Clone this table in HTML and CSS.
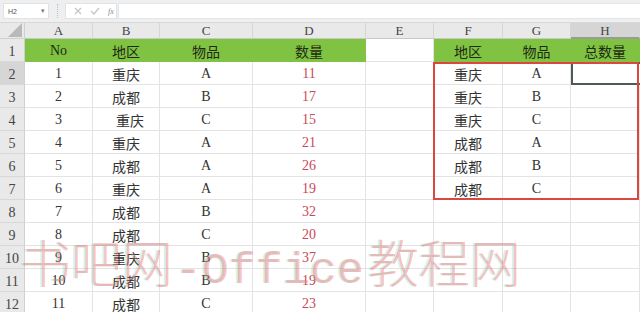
FILE: index.html
```html
<!DOCTYPE html>
<html>
<head>
<meta charset="utf-8">
<link rel="stylesheet" href="styles.css">
</head>
<body>
<div class="app">
  <div class="toolbar">
    <div class="namebox"><span class="nb-text">H2</span><span class="nb-arrow">▾</span></div>
    <div class="sep"></div>
    <div class="fxbox">
      <svg width="8" height="8" viewBox="0 0 8 8"><path d="M1 1L7 7M7 1L1 7" stroke="#c4c4c4" stroke-width="1.2"/></svg>
      <svg width="10" height="8" viewBox="0 0 10 8"><path d="M1 4L4 7L9 1" stroke="#c4c4c4" stroke-width="1.2" fill="none"/></svg>
      <span class="fx">fx</span>
    </div>
    <div class="formula"></div>
  </div>
  <div class="sheet">
    <div class="corner"><svg width="14" height="14" viewBox="0 0 14 14"><path d="M14 0L14 14L0 14Z" fill="#b9b9b9"/></svg></div>
    <div class="ch">A</div><div class="ch">B</div><div class="ch">C</div><div class="ch">D</div><div class="ch">E</div><div class="ch">F</div><div class="ch">G</div><div class="ch ch-sel">H</div>

    <div class="rh">1</div>
    <div class="c g">No</div><div class="c g">地区</div><div class="c g">物品</div><div class="c g">数量</div><div class="c"></div><div class="c g">地区</div><div class="c g">物品</div><div class="c g">总数量</div>

    <div class="rh rh-sel">2</div>
    <div class="c">1</div><div class="c">重庆</div><div class="c">A</div><div class="c r">11</div><div class="c"></div><div class="c">重庆</div><div class="c">A</div><div class="c sel"></div>

    <div class="rh">3</div>
    <div class="c">2</div><div class="c">成都</div><div class="c">B</div><div class="c r">17</div><div class="c"></div><div class="c">重庆</div><div class="c">B</div><div class="c"></div>

    <div class="rh">4</div>
    <div class="c">3</div><div class="c ind">重庆</div><div class="c">C</div><div class="c r">15</div><div class="c"></div><div class="c">重庆</div><div class="c">C</div><div class="c"></div>

    <div class="rh">5</div>
    <div class="c">4</div><div class="c">重庆</div><div class="c">A</div><div class="c r">21</div><div class="c"></div><div class="c">成都</div><div class="c">A</div><div class="c"></div>

    <div class="rh">6</div>
    <div class="c">5</div><div class="c">成都</div><div class="c">A</div><div class="c r">26</div><div class="c"></div><div class="c">成都</div><div class="c">B</div><div class="c"></div>

    <div class="rh">7</div>
    <div class="c">6</div><div class="c">重庆</div><div class="c">A</div><div class="c r">19</div><div class="c"></div><div class="c">成都</div><div class="c">C</div><div class="c"></div>

    <div class="rh">8</div>
    <div class="c">7</div><div class="c">成都</div><div class="c">B</div><div class="c r">32</div><div class="c"></div><div class="c"></div><div class="c"></div><div class="c"></div>

    <div class="rh">9</div>
    <div class="c">8</div><div class="c">成都</div><div class="c">C</div><div class="c r">20</div><div class="c"></div><div class="c"></div><div class="c"></div><div class="c"></div>

    <div class="rh">10</div>
    <div class="c">9</div><div class="c">重庆</div><div class="c">B</div><div class="c r">37</div><div class="c"></div><div class="c"></div><div class="c"></div><div class="c"></div>

    <div class="rh">11</div>
    <div class="c">10</div><div class="c">成都</div><div class="c">B</div><div class="c r">19</div><div class="c"></div><div class="c"></div><div class="c"></div><div class="c"></div>

    <div class="rh">12</div>
    <div class="c">11</div><div class="c">成都</div><div class="c">C</div><div class="c r">23</div><div class="c"></div><div class="c"></div><div class="c"></div><div class="c"></div>

    <div class="redbox"></div>
  </div>
  <div class="watermark"><span class="wm-cjk">书吧网</span><span class="wm-lat">-Office</span><span class="wm-cjk">教程网</span></div>
</div>
</body>
</html>
```

FILE: styles.css
```css
* { box-sizing: border-box; }
html, body { margin: 0; padding: 0; background: #ffffff; }
.app {
  position: relative;
  width: 640px;
  height: 312px;
  overflow: hidden;
  font-family: "Liberation Serif", "Noto Sans CJK SC", serif;
}
.toolbar {
  height: 23px;
  background: #eeeff1;
  display: flex;
  align-items: center;
  padding: 0 0 0 3px;
  border-bottom: 1px solid #d8d8d8;
}
.namebox {
  width: 46px;
  height: 16px;
  background: #fff;
  border: 1px solid #e2e2e2;
  display: flex;
  align-items: center;
  justify-content: space-between;
  padding: 0 3px 0 4px;
  font-family: "Liberation Sans", sans-serif;
  font-size: 7px;
  color: #555;
}
.nb-arrow { font-size: 7px; color: #777; }
.sep {
  width: 1px;
  height: 14px;
  margin: 0 7px 0 8px;
  border-left: 1px dotted #c0c0c0;
}
.fxbox {
  width: 52px;
  height: 16px;
  background: #fff;
  border: 1px solid #e2e2e2;
  display: flex;
  align-items: center;
  gap: 8px;
  padding-left: 8px;
}
.fx { font-family: "Liberation Serif", serif; font-style: italic; font-size: 8px; color: #888; }
.formula {
  flex: 1;
  height: 16px;
  background: #fff;
  border: 1px solid #e6e6e6;
  border-right: none;
  margin-left: 1px;
}
.sheet {
  position: relative;
  display: grid;
  grid-template-columns: 25px 68px 67px 93px 113px 68px 69px 68px 69px;
  grid-template-rows: 16px repeat(12, 23px);
  font-size: 14px;
  color: #333;
}
.corner {
  background: #e9e9e9;
  border-right: 1px solid #d0d0d0;
  border-bottom: 1px solid #d0d0d0;
  display: flex;
  align-items: flex-end;
  justify-content: flex-end;
  padding: 0 2px 1px 0;
}
.ch {
  background: #e9e9e9;
  border-right: 1px solid #d6d6d6;
  border-bottom: 1px solid #c8c8c8;
  display: flex;
  align-items: center;
  justify-content: center;
  font-size: 13px;
  color: #444;
  line-height: 1;
}
.ch-sel { background: #d5d5d5; border-bottom: 2px solid #9a9a9a; }
.rh {
  background: #e9e9e9;
  border-right: 1px solid #d0d0d0;
  border-bottom: 1px solid #d8d8d8;
  display: flex;
  align-items: center;
  justify-content: center;
  font-size: 14px;
  color: #444;
  padding-top: 3px;
}
.rh-sel { background: #d6d6d6; }
.c {
  border-right: 1px solid #e3e3e3;
  border-bottom: 1px solid #e3e3e3;
  display: flex;
  align-items: center;
  justify-content: center;
  font-size: 14px;
  color: #333;
  padding-top: 2px;
}
.c.g {
  background: #80c343;
  border-right-color: #80c343;
  border-bottom-color: #80c343;
  color: #1e2a12;
}
.c.r { color: #c9485b; }
.c.ind { padding-left: 8px; }
.c.sel { border: 2px solid #4e5a52; border-right: none; }
.redbox {
  position: absolute;
  left: 433px;
  top: 39px;
  width: 206px;
  height: 138px;
  border: 2px solid #d9473f;
  pointer-events: none;
}
.watermark {
  position: absolute;
  left: 20px;
  top: 236px;
  display: flex;
  align-items: baseline;
  color: rgba(238, 110, 120, 0.42);
  text-shadow: -2px 0 0 rgba(120, 210, 170, 0.28);
  white-space: nowrap;
  line-height: 1;
}
.wm-cjk { font-family: "Noto Sans CJK SC", sans-serif; font-size: 51px; font-weight: 300; }
.wm-lat { font-family: "Liberation Mono", monospace; font-size: 45px; margin: 0 4px 0 2px; }
```
